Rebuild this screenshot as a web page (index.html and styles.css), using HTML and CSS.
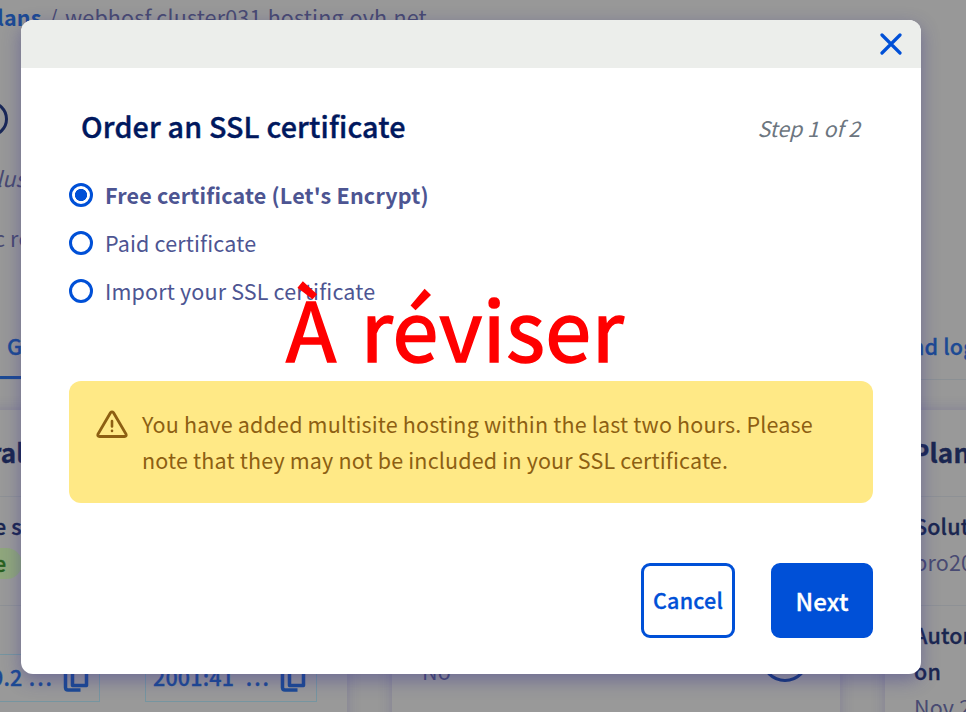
FILE: index.html
```
<!DOCTYPE html>
<html lang="en">
<head>
<meta charset="utf-8">
<title>Order an SSL certificate</title>
<link rel="stylesheet" href="styles.css">
</head>
<body>
<div class="page">
  <nav class="crumbs"><b>lans</b><span class="sep">/</span><span class="host">webhosf.cluster031.hosting.ovh.net</span></nav>
  <div class="ring"></div>
  <div class="cluster">lus</div>
  <div class="offer">c re</div>
  <div class="tabs"><span class="tab active">G</span><span class="tab logs">nd logs</span></div>
  <main class="cards">
    <section class="card first">
      <h2>ral</h2>
      <div class="row"><strong>e s</strong><span class="badge">e</span></div>
      <div class="ips">
        <div class="ip"><span>9.2</span><span class="dots">...</span><svg viewBox="0 0 26 28"><path d="M9.500 2.500h14v19h-14zM2.500 7v16.500q0 2.500 2.500 2.500h12.500"/></svg></div>
        <div class="ip wide"><span>2001:41</span><span class="dots">...</span><svg viewBox="0 0 26 28"><path d="M9.500 2.500h14v19h-14zM2.500 7v16.500q0 2.500 2.500 2.500h12.500"/></svg></div>
      </div>
    </section>
    <section class="card second"><span class="no">No</span><div class="more"></div></section>
    <section class="card third">
      <h2>Plan</h2>
      <div class="row"><strong>Solution</strong><span>pro2014</span></div>
      <div class="row last"><strong>Automatic<br>on</strong><span>Nov 2</span></div>
    </section>
  </main>
</div>
<div class="modal">
  <header class="bar"><svg class="close" viewBox="0 0 22 22"><path d="M2 2l18 18M20 2L2 20"/></svg></header>
  <div class="body">
    <div class="heading"><h1>Order an SSL certificate</h1><em>Step 1 of 2</em></div>
    <div class="options">
      <label class="option on"><i></i><span>Free certificate (Let's Encrypt)</span></label>
      <label class="option"><i></i><span>Paid certificate</span></label>
      <label class="option"><i></i><span>Import your SSL certificate</span></label>
    </div>
    <div class="alert">
      <svg viewBox="0 0 32 28"><path class="tri" d="M14.500 2.700q1.500-1.600 3 0L30 24q.9 2.500-1.500 2.500h-25Q1.100 26.500 2 24z"/><path class="mark" d="M16 11v5.500M16 20.700v.2"/></svg>
      <p>You have added multisite hosting within the last two hours. Please<br>note that they may not be included in your SSL certificate.</p>
    </div>
    <div class="actions"><button class="cancel">Cancel</button><button class="next">Next</button></div>
  </div>
</div>
<div class="stamp">À réviser</div>
</body>
</html>
```
FILE: styles.css
```
* { box-sizing: border-box; }
body { margin: 0; width: 966px; height: 712px; overflow: hidden; position: relative; background: #989898; font: 21.5px/36px "Noto Sans CJK SC", sans-serif; letter-spacing: .165px; color: #484a72; }
h1, h2, p { margin: 0; }
svg { fill: none; flex: none; }
.page { width: 966px; height: 712px; overflow: hidden; display: flex; flex-direction: column; white-space: nowrap; }
.page > * { flex: none; }
.crumbs { height: 101px; margin: -1px 0 0 -3px; display: flex; }
.crumbs b { color: #1c4a94; width: 52px; font-weight: 700; }
.sep { width: 16px; }
.ring { width: 36px; height: 36px; margin-left: -28px; border: 3px solid #1a2858; border-radius: 50%; margin-top: 1px; }
.cluster { font-style: italic; margin: 23px 0 0 -4px; height: 36px; }
.offer { margin: 24px 0 0 -6px; height: 36px; }
.tabs { display: flex; justify-content: space-between; margin-top: 67px; height: 57px; border-bottom: 1px solid #8b9094; color: #1c4a94; font-weight: 500; -webkit-text-stroke: .3px; }
.tab { padding-top: 5px; }
.active { width: 170px; padding-left: 7px; border-bottom: 3px solid #1c4a94; }
.logs { width: 55px; }
.cards { height: 330px; margin: 30px 0 0 -100px; display: grid; grid-template-columns: 447px 448px 270px; gap: 45px; }
.card { box-shadow: 0 0 12px rgba(60, 55, 140, .25); background: #999; }
.card h2 { height: 87px; padding-top: 24px; font-size: 26px; font-weight: 700; color: #1a2650; border-bottom: 1px solid #8e9195; -webkit-text-stroke: .4px; }
.first .row { padding-left: 94px; }
.first h2 { padding-left: 90px; }
.row { height: 109px; padding-top: 11px; border-bottom: 1px solid #8e9195; display: flex; flex-direction: column; }
.row strong { font-weight: 500; color: #1a2650; -webkit-text-stroke: .3px; }
.badge { width: 48px; height: 31px; margin: 4px 0 0 -20px; padding-left: 20px; line-height: 29px; border-radius: 16px; background: #8fa67c; color: #276020; font-weight: 500; -webkit-text-stroke: .3px; }
.ips { display: flex; gap: 45px; margin-top: 48px; }
.ip { width: 200px; height: 48px; border: 1px solid #7695a0; padding: 4px 10px 0 90px; display: flex; color: #1c4a94; font-weight: 500; -webkit-text-stroke: .3px; }
.ip span { flex: 1; }
.wide { width: 172px; padding: 4px 10px 0 7px; }
.ip .dots { flex: none; margin-right: 9px; letter-spacing: 2px; }
.ip svg { width: 26px; height: 28px; margin-top: 5px; stroke: #1c4a94; stroke-width: 3.500; stroke-linejoin: round; }
.second { display: flex; justify-content: space-between; padding: 243px 31px 0 30px; }
.more { width: 48px; height: 48px; margin-top: -19px; border: 3px solid #153778; border-radius: 50%; }
.third .row { padding-left: 29px; }
.third h2 { padding-left: 27px; }
.last { height: 130px; }
.modal { position: absolute; left: 21px; top: 20px; width: 900px; height: 654px; border-radius: 12px; background: #fff; overflow: hidden; box-shadow: 0 6px 18px rgba(50, 45, 140, .42); }
.bar { height: 48px; background: #eceeeb; display: flex; justify-content: flex-end; padding: 13px 19px 0 0; }
.close { width: 22px; height: 22px; stroke: #0050d7; stroke-width: 3.200; stroke-linecap: round; }
.body { padding: 0 48px; color: #4d5592; }
.heading { height: 103px; padding: 38px 13px 0 12px; display: flex; justify-content: space-between; white-space: nowrap; }
h1 { font-size: 28.7px; line-height: 40px; font-weight: 500; color: #00185e; -webkit-text-stroke: .4px; }
em { color: #6c7680; line-height: 44px; font-size: 21.3px; letter-spacing: 0; }
.options { display: flex; flex-direction: column; gap: 12px; padding-top: 6px; }
.option { display: flex; height: 36px; }
.option span { white-space: nowrap; }
.option i { width: 24px; height: 24px; margin: 6px 12px 0 0; border: 3px solid #0050d7; border-radius: 50%; }
.on { font-weight: 700; letter-spacing: .2px; }
.on i { background: radial-gradient(circle, #0050d7 5.700px, #fff 6.500px); }
.alert { margin-top: 72px; height: 122px; padding: 25px 27px; border-radius: 12px; background: #ffe986; color: #8d5f12; display: flex; white-space: nowrap; }
.alert svg { width: 32px; height: 28px; margin: 4px 14px 0 0; stroke: #8d5f12; stroke-width: 2.800; stroke-linecap: round; }
.mark { stroke-width: 2.600; }
.actions { display: flex; justify-content: flex-end; gap: 36px; margin-top: 60px; }
button { height: 75px; padding: 0 0 2px; border: 3px solid #0050d7; border-radius: 9px; font: 500 21.5px "Noto Sans CJK SC", sans-serif; letter-spacing: .2px; color: #0050d7; background: #fff; -webkit-text-stroke: .3px; }
.cancel { width: 94px; }
.next { width: 102px; background: #0050d7; color: #fff; font-size: 24px; padding: 0; }
.stamp { position: absolute; left: 286px; top: 266px; font-size: 82.5px; line-height: 120px; color: #f00; white-space: nowrap; letter-spacing: .6px; word-spacing: 5px; -webkit-text-stroke: 1.600px; }
```
